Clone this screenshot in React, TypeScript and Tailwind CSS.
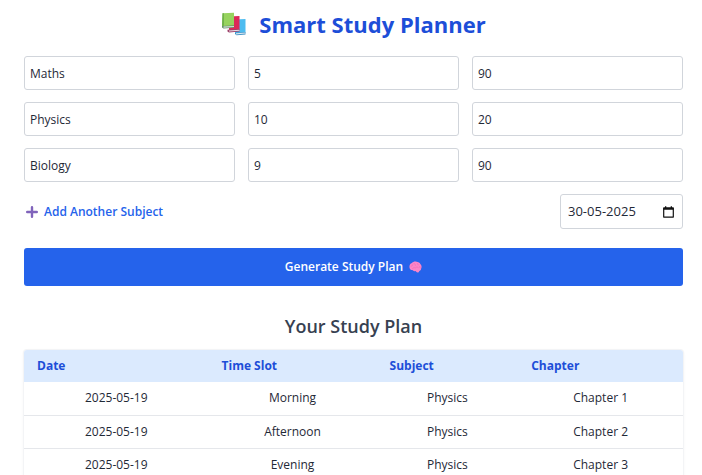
import React, { useState } from "react";

type Subject = { name: string; chapters: string; minutes: string };

const initialSubjects: Subject[] = [
  { name: "Maths", chapters: "5", minutes: "90" },
  { name: "Physics", chapters: "10", minutes: "20" },
  { name: "Biology", chapters: "9", minutes: "90" },
];

const plan = [
  { date: "2025-05-19", slot: "Morning", subject: "Physics", chapter: "Chapter 1" },
  { date: "2025-05-19", slot: "Afternoon", subject: "Physics", chapter: "Chapter 2" },
  { date: "2025-05-19", slot: "Evening", subject: "Physics", chapter: "Chapter 3" },
];

const fields: { key: keyof Subject; label: string }[] = [
  { key: "name", label: "Subject name" },
  { key: "chapters", label: "Number of chapters" },
  { key: "minutes", label: "Minutes per chapter" },
];

function BooksIcon() {
  return (
    <svg className="h-6 w-[26px] shrink-0" viewBox="0 0 26 24" aria-hidden="true">
      <path d="M14 7.5 24.5 7v14l-9 1.5L14 21z" fill="#4dbcf0" />
      <path d="M14 20.7 24.5 20v2.4l-9 .8L14 22z" fill="#3c8fc4" />
      <path d="M15 21.2l9.5-.7v1.1l-9.5.8z" fill="#dce7ef" />
      <path d="M8 4.5 18.5 4v14L9 19l-1-1.5z" fill="#dc2858" />
      <path d="M6.5 17.8l12-.8v2.6l-10.5.8-1.5-1z" fill="#9c3f68" />
      <path d="M8 18.4l10.5-.7v1.1L8 19.6z" fill="#eadfe7" />
      <path d="M1.5 1.3 13 .8v13.4L2 15 1 13.5z" fill="#97d35e" />
      <path d="M1.5 1.3 3 1.2v12.6L1 14z" fill="#70b14c" />
      <path d="M1 14l12-.8v2.5L2.5 16.5 1 15.5z" fill="#638f65" />
      <path d="M2.5 14.6 13 13.9V15l-10.5.8z" fill="#d9e3dc" />
    </svg>
  );
}

function PlusIcon() {
  return (
    <svg className="size-3 shrink-0" viewBox="0 0 12 12" aria-hidden="true">
      <path d="M6 1.2v9.6M1.2 6h9.6" fill="none" stroke="#8064bb" strokeWidth="2.4" strokeLinecap="round" />
    </svg>
  );
}

function BrainIcon() {
  return (
    <svg className="h-3 w-[13px] shrink-0" viewBox="0 0 13 12" aria-hidden="true">
      <path
        d="M.5 6.4C.1 4.3 1.3 2.5 3 2 4 .7 6 .2 7.6.8c1.8 0 3.2.9 3.7 2.3 1.4 1 1.7 3.2.8 4.6-.1 1.3-1 2.1-1.8 2.2-.1.9-.9 1.7-1.8 1.5-.9-.1-1.4-.7-1.7-1.4-1.4.5-2.7.1-3.3-.9C2 9.2.6 8 .5 6.4Z"
        fill="#fb85c8"
      />
      <path
        d="M2 5.2c1.2-.1 1.7-.7 1.8-1.6M5 2.6c1 .1 1.6.8 1.5 1.7M8.5 2.2c-.4.8 0 1.5.8 1.7M3.5 7.6c.7-1 1.8-1.2 2.8-.7.8-1 2-1.1 2.9-.4M10.7 5.5c-.1.9.2 1.4.8 1.6"
        fill="none"
        stroke="#ee66b2"
        strokeWidth=".6"
        strokeLinecap="round"
      />
    </svg>
  );
}

function CalendarIcon() {
  return (
    <svg className="h-3 w-[11px]" viewBox="0 0 11 12" aria-hidden="true">
      <path d="M.7 2h9.6v9.1H.7z" fill="none" stroke="#111" strokeWidth="1.2" strokeLinejoin="round" />
      <path d="M.5 1.5h10v2.2H.5zM2 .2h1.3v2H2zM7.7.2H9v2H7.7z" fill="#111" />
    </svg>
  );
}

export default function App() {
  const [subjects, setSubjects] = useState(initialSubjects);
  const [examDate, setExamDate] = useState("30-05-2025");

  const update = (row: number, key: keyof Subject, value: string) =>
    setSubjects((list) => list.map((s, i) => (i === row ? { ...s, [key]: value } : s)));

  return (
    <main className="bg-white pt-2 pr-[19px] pl-6 font-['Open_Sans','Noto_Sans',sans-serif] text-[12px] text-[#1f2937]">
      <h1 className="mb-4 flex h-8 items-center justify-center gap-3 text-[22px] font-bold text-[#1d4ed8]">
        <BooksIcon />
        Smart Study Planner
      </h1>

      <form onSubmit={(e) => e.preventDefault()}>
        <div className="grid gap-3">
          {subjects.map((subject, row) => (
            <div key={row} className="grid grid-cols-3 gap-[13px]">
              {fields.map(({ key, label }) => (
                <input
                  key={key}
                  aria-label={`${label} ${row + 1}`}
                  className="h-[34px] w-full min-w-0 rounded-[3px] border border-[#d1d5db] px-[5px]"
                  value={subject[key]}
                  onChange={(e) => update(row, key, e.target.value)}
                />
              ))}
            </div>
          ))}
        </div>

        <div className="mt-3 flex items-center justify-between">
          <button
            type="button"
            className="flex items-center gap-1.5 pl-0.5 font-semibold text-[#2563eb]"
            onClick={() => setSubjects((list) => [...list, { name: "", chapters: "", minutes: "" }])}
          >
            <PlusIcon />
            Add Another Subject
          </button>
          <div className="flex h-[35px] w-[123px] items-center rounded-[3px] border border-[#d1d5db] pr-2 pl-[7px]">
            <input
              aria-label="Exam date"
              className="w-full min-w-0 text-[13px]"
              value={examDate}
              onChange={(e) => setExamDate(e.target.value)}
            />
            <button type="button" aria-label="Choose date">
              <CalendarIcon />
            </button>
          </div>
        </div>

        <button
          type="submit"
          className="mt-[19px] flex h-[38px] w-full items-center justify-center gap-1.5 rounded-[3px] bg-[#2563eb] font-semibold text-white"
        >
          Generate Study Plan
          <BrainIcon />
        </button>
      </form>

      <section className="mt-6">
        <h2 className="mb-2 text-center text-[18px] leading-8 font-semibold text-[#374151]">Your Study Plan</h2>
        <div className="overflow-hidden rounded-[3px] shadow-sm ring-1 ring-gray-100">
          <table className="w-full table-fixed border-collapse">
            <colgroup>
              <col className="w-[28%]" />
              <col className="w-[25.5%]" />
              <col className="w-[21.5%]" />
              <col className="w-[25%]" />
            </colgroup>
            <thead className="bg-[#dbeafe] text-left text-[#1d4ed8]">
              <tr className="h-8">
                <th className="px-[13px]">Date</th>
                <th className="px-[13px]">Time Slot</th>
                <th className="px-[13px]">Subject</th>
                <th className="px-[13px]">Chapter</th>
              </tr>
            </thead>
            <tbody className="text-center">
              {plan.map((item) => (
                <tr key={item.chapter} className="h-[33px] border-b border-[#e5e7eb]">
                  <td className="px-[13px]">{item.date}</td>
                  <td className="px-[13px]">{item.slot}</td>
                  <td className="px-[13px]">{item.subject}</td>
                  <td className="px-[13px]">{item.chapter}</td>
                </tr>
              ))}
            </tbody>
          </table>
        </div>
      </section>
    </main>
  );
}
